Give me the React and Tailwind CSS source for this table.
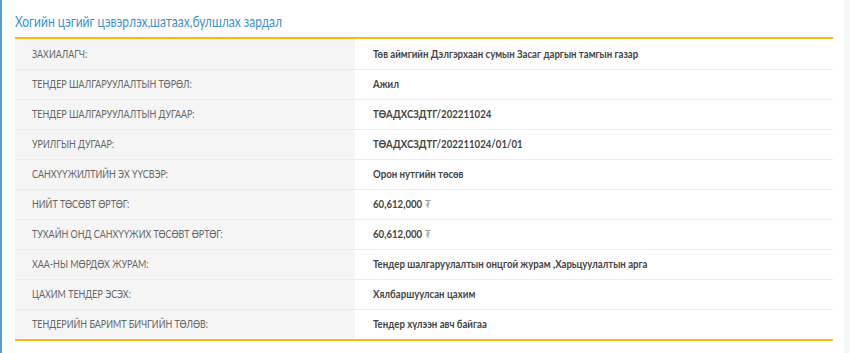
const rows = [
  ["ЗАХИАЛАГЧ:", "Төв аймгийн Дэлгэрхаан сумын Засаг даргын тамгын газар"],
  ["ТЕНДЕР ШАЛГАРУУЛАЛТЫН ТӨРӨЛ:", "Ажил"],
  ["ТЕНДЕР ШАЛГАРУУЛАЛТЫН ДУГААР:", "ТӨАДХСЗДТГ/202211024"],
  ["УРИЛГЫН ДУГААР:", "ТӨАДХСЗДТГ/202211024/01/01"],
  ["САНХҮҮЖИЛТИЙН ЭХ ҮҮСВЭР:", "Орон нутгийн төсөв"],
  ["НИЙТ ТӨСӨВТ ӨРТӨГ:", "60,612,000", true],
  ["ТУХАЙН ОНД САНХҮҮЖИХ ТӨСӨВТ ӨРТӨГ:", "60,612,000", true],
  ["ХАА-НЫ МӨРДӨХ ЖУРАМ:", "Тендер шалгаруулалтын онцгой журам ,Харьцуулалтын арга"],
  ["ЦАХИМ ТЕНДЕР ЭСЭХ:", "Хялбаршуулсан цахим"],
  ["ТЕНДЕРИЙН БАРИМТ БИЧГИЙН ТӨЛӨВ:", "Тендер хүлээн авч байгаа"],
];

export default function App() {
  return (
    <div className="flex h-[353px] w-[850px] bg-white font-['Lato',sans-serif]">
      <div className="w-[2px] bg-[#5b9bd5]" />
      <div className="flex-1 pl-[13px] pr-[11px]">
        <h2 className="pt-[10px] text-[16px] leading-[21px] text-[#3d8fd0]">
          <span className="inline-block origin-left scale-x-[0.75] whitespace-nowrap">
            Хогийн цэгийг цэвэрлэх,шатаах,булшлах зардал
          </span>
        </h2>
        <div className="mt-[6px] border-y-2 border-[#fdb913]">
          {rows.map(([label, value, money], i) => (
            <div key={label} className={`flex h-[30px] ${i > 0 ? "border-t border-[#ececec]" : ""}`}>
              <div className="flex w-[340px] items-center bg-[#f5f5f5] pl-[17px] text-[11px] text-[#666]">
                <span className="inline-block origin-left scale-x-[0.81] whitespace-nowrap">{label}</span>
              </div>
              <div className="flex flex-1 items-center pl-[18px] text-[11px] font-bold text-[#444]">
                <span className="inline-block origin-left scale-x-[0.875] whitespace-nowrap">
                  {value}
                  {money && <span className="ml-[3px] font-normal text-[#999]">₮</span>}
                </span>
              </div>
            </div>
          ))}
        </div>
      </div>
      <div className="w-[6px] bg-[#f7f7f7]" />
    </div>
  );
}
